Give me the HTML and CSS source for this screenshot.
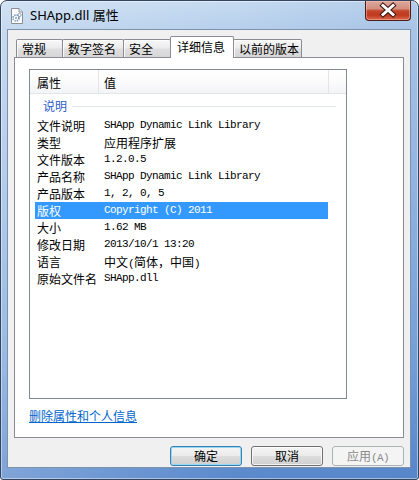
FILE: index.html
```html
<!DOCTYPE html>
<html lang="zh">
<head>
<meta charset="utf-8">
<title>SHApp.dll 属性</title>
<link rel="stylesheet" href="styles.css">
</head>
<body>
<div class="window">
  <div class="titlebar">
    <svg class="appicon" width="14" height="16" viewBox="0 0 14 16">
      <path d="M1.5 0.5 H9 L12.5 4 V15.5 H1.5 Z" fill="#fdfdfd" stroke="#8a8f96"/>
      <path d="M9 0.5 V4 H12.5" fill="#e4e7eb" stroke="#8a8f96"/>
      <circle cx="6" cy="10" r="3" fill="none" stroke="#6f8fb5" stroke-width="1.6" stroke-dasharray="1.4 1"/>
      <circle cx="6" cy="10" r="1.2" fill="#9fb7d3"/>
      <circle cx="9.5" cy="7" r="1.6" fill="none" stroke="#8aa0ba" stroke-width="1"/>
    </svg>
    <span class="title">SHApp.dll 属性</span>
    <div class="close">
      <svg width="44" height="19" viewBox="0 0 44 19">
        <path d="M17 4.5 L27 13.5 M27 4.5 L17 13.5" stroke="#3a1510" stroke-width="5" stroke-linecap="square"/>
        <path d="M17 4.5 L27 13.5 M27 4.5 L17 13.5" stroke="#ffffff" stroke-width="3" stroke-linecap="square"/>
      </svg>
    </div>
  </div>
  <div class="client">
    <div class="tabs">
      <div class="tab t1">常规</div>
      <div class="tab t2">数字签名</div>
      <div class="tab t3">安全</div>
      <div class="tab sel">详细信息</div>
      <div class="tab t5">以前的版本</div>
    </div>
    <div class="panel">
      <div class="list">
        <div class="lhead">
          <div class="hc c1">属性</div>
          <div class="hc c2">值</div>
          <div class="hc c3"></div>
        </div>
        <div class="group"><span>说明</span><i class="gline"></i></div>
        <div class="row"><span class="k">文件说明</span><span class="v m">SHApp Dynamic Link Library</span></div>
        <div class="row"><span class="k">类型</span><span class="v">应用程序扩展</span></div>
        <div class="row"><span class="k">文件版本</span><span class="v m">1.2.0.5</span></div>
        <div class="row"><span class="k">产品名称</span><span class="v m">SHApp Dynamic Link Library</span></div>
        <div class="row"><span class="k">产品版本</span><span class="v m">1, 2, 0, 5</span></div>
        <div class="row selected"><span class="k">版权</span><span class="v m">Copyright (C) 2011</span></div>
        <div class="row"><span class="k">大小</span><span class="v m">1.62 MB</span></div>
        <div class="row"><span class="k">修改日期</span><span class="v m">2013/10/1 13:20</span></div>
        <div class="row"><span class="k">语言</span><span class="v">中文<span class="m">(</span>简体，中国<span class="m">)</span></span></div>
        <div class="row"><span class="k">原始文件名</span><span class="v m">SHApp.dll</span></div>
      </div>
      <a class="link" href="#">删除属性和个人信息</a>
    </div>
    <div class="buttons">
      <div class="btn def">确定</div>
      <div class="btn">取消</div>
      <div class="btn dis">应用<span class="m">(A)</span></div>
    </div>
  </div>
</div>
</body>
</html>
```
FILE: styles.css
```css
* { box-sizing: border-box; }
html, body { margin: 0; padding: 0; background: #ffffff; }
body {
  width: 419px;
  height: 480px;
  overflow: hidden;
  font-family: "Noto Sans CJK SC", "Noto Sans", sans-serif;
  font-size: 12px;
  color: #000;
}
.window {
  width: 419px;
  height: 480px;
  border: 1px solid #34465f;
  border-radius: 7px 7px 3px 3px;
  display: flex;
  flex-direction: column;
  background:
    linear-gradient(90deg, rgba(255,255,255,0.22), rgba(255,255,255,0) 55%, rgba(50,100,180,0.12)),
    linear-gradient(180deg, #c6dbf1 0, #b7d0ec 28px, #a2c1e7 160px, #7ca6dc 360px, #5a89cc 480px);
  box-shadow: inset 0 0 0 1px rgba(255,255,255,0.45);
}
.titlebar {
  height: 28px;
  flex: none;
  display: flex;
  align-items: flex-start;
}
.appicon { margin: 7px 0 0 9px; flex: none; }
.title {
  margin: 5px 0 0 6px;
  font-family: "Noto Sans", "Noto Sans CJK SC", sans-serif;
  font-size: 13px;
  line-height: 18px;
  color: #000;
}
.close {
  margin-left: auto;
  margin-right: 7px;
  width: 46px;
  height: 20px;
  border: 1px solid #4a1d15;
  border-top: none;
  border-radius: 0 0 4px 4px;
  background: linear-gradient(180deg, #dba79c 0, #d48f80 40%, #c2452b 52%, #c13a20 75%, #dc6a4f 100%);
  box-shadow: inset 0 0 0 1px rgba(255,200,190,0.45);
}
.close svg { display: block; }
.client {
  flex: 1;
  margin: 0 7px 11px 6px;
  background: #f0f0f0;
  border: 1px solid #7d91ab;
  padding: 6px 6px 0 6px;
  display: flex;
  flex-direction: column;
}
.tabs {
  height: 21px;
  flex: none;
  display: flex;
  align-items: flex-end;
  padding-left: 2px;
}
.tab {
  height: 18px;
  border: 1px solid #898c95;
  border-bottom: none;
  border-radius: 2px 2px 0 0;
  background: linear-gradient(180deg, #f7f7f7 0, #ececec 45%, #dedede 55%, #d6d6d6 100%);
  box-shadow: inset 1px 1px 0 rgba(255,255,255,0.8);
  padding-left: 5px;
  line-height: 17px;
  margin-right: -1px;
  white-space: nowrap;
}
.t1 { width: 47px; }
.t2 { width: 62px; }
.t3 { width: 48px; }
.t5 { width: 69px; }
.tab.sel {
  width: 64px;
  height: 22px;
  background: #ffffff;
  box-shadow: none;
  margin-bottom: -1px;
  position: relative;
  z-index: 1;
  line-height: 19px;
  padding-left: 6px;
}
.panel {
  height: 381px;
  flex: none;
  border: 1px solid #898c95;
  background: #ffffff;
  padding: 11px 0 0 14px;
}
.list {
  width: 318px;
  height: 330px;
  border: 1px solid #828790;
  background: #fff;
}
.lhead {
  height: 24px;
  display: flex;
  background: linear-gradient(180deg, #ffffff 0, #fbfbfc 50%, #f3f4f6 100%);
  border-bottom: 1px solid #e3e5e9;
}
.hc {
  height: 23px;
  line-height: 23px;
  padding-top: 1px;
}
.c1 { width: 69px; padding-left: 7px; border-right: 1px solid #e2e4e8; }
.c2 { width: 230px; padding-left: 5px; border-right: 1px solid #e2e4e8; }
.c3 { flex: 1; }
.group {
  height: 23px;
  display: flex;
  align-items: center;
  padding: 0 10px 0 13px;
  color: #2e5ccc;
  line-height: 21px;
}
.gline {
  flex: 1;
  height: 1px;
  margin-left: 5px;
  margin-top: 1px;
  background: #e1e6ee;
}
.row {
  margin-left: 5px;
  width: 293px;
  height: 17px;
  line-height: 17px;
  display: flex;
  white-space: nowrap;
}
.row.selected { background: #3399ff; color: #fff; }
.k { width: 69px; padding-left: 2px; flex: none; }
.v { flex: 1; }
.m {
  font-family: "Liberation Mono", "DejaVu Sans Mono", monospace;
  font-size: 11px;
  letter-spacing: -0.6px;
}
.link {
  display: block;
  width: max-content;
  margin-top: 8px;
  line-height: 17px;
  color: #0066cc;
  text-decoration: underline;
}
.buttons {
  display: flex;
  justify-content: flex-end;
  gap: 9px;
  margin-top: 8px;
}
.btn {
  width: 72px;
  height: 20px;
  border: 1px solid #707070;
  border-radius: 3px;
  background: linear-gradient(180deg, #f4f4f4 0, #ebebeb 48%, #dddddd 52%, #cfcfcf 100%);
  box-shadow: inset 0 0 0 1px rgba(255,255,255,0.75);
  text-align: center;
  line-height: 18px;
}
.btn.def {
  border-color: #3c7fb1;
  box-shadow: inset 0 0 0 1px #93d8f6;
}
.btn.dis {
  border-color: #adb2b5;
  background: #f4f4f4;
  box-shadow: none;
  color: #8a8a8a;
}
```
